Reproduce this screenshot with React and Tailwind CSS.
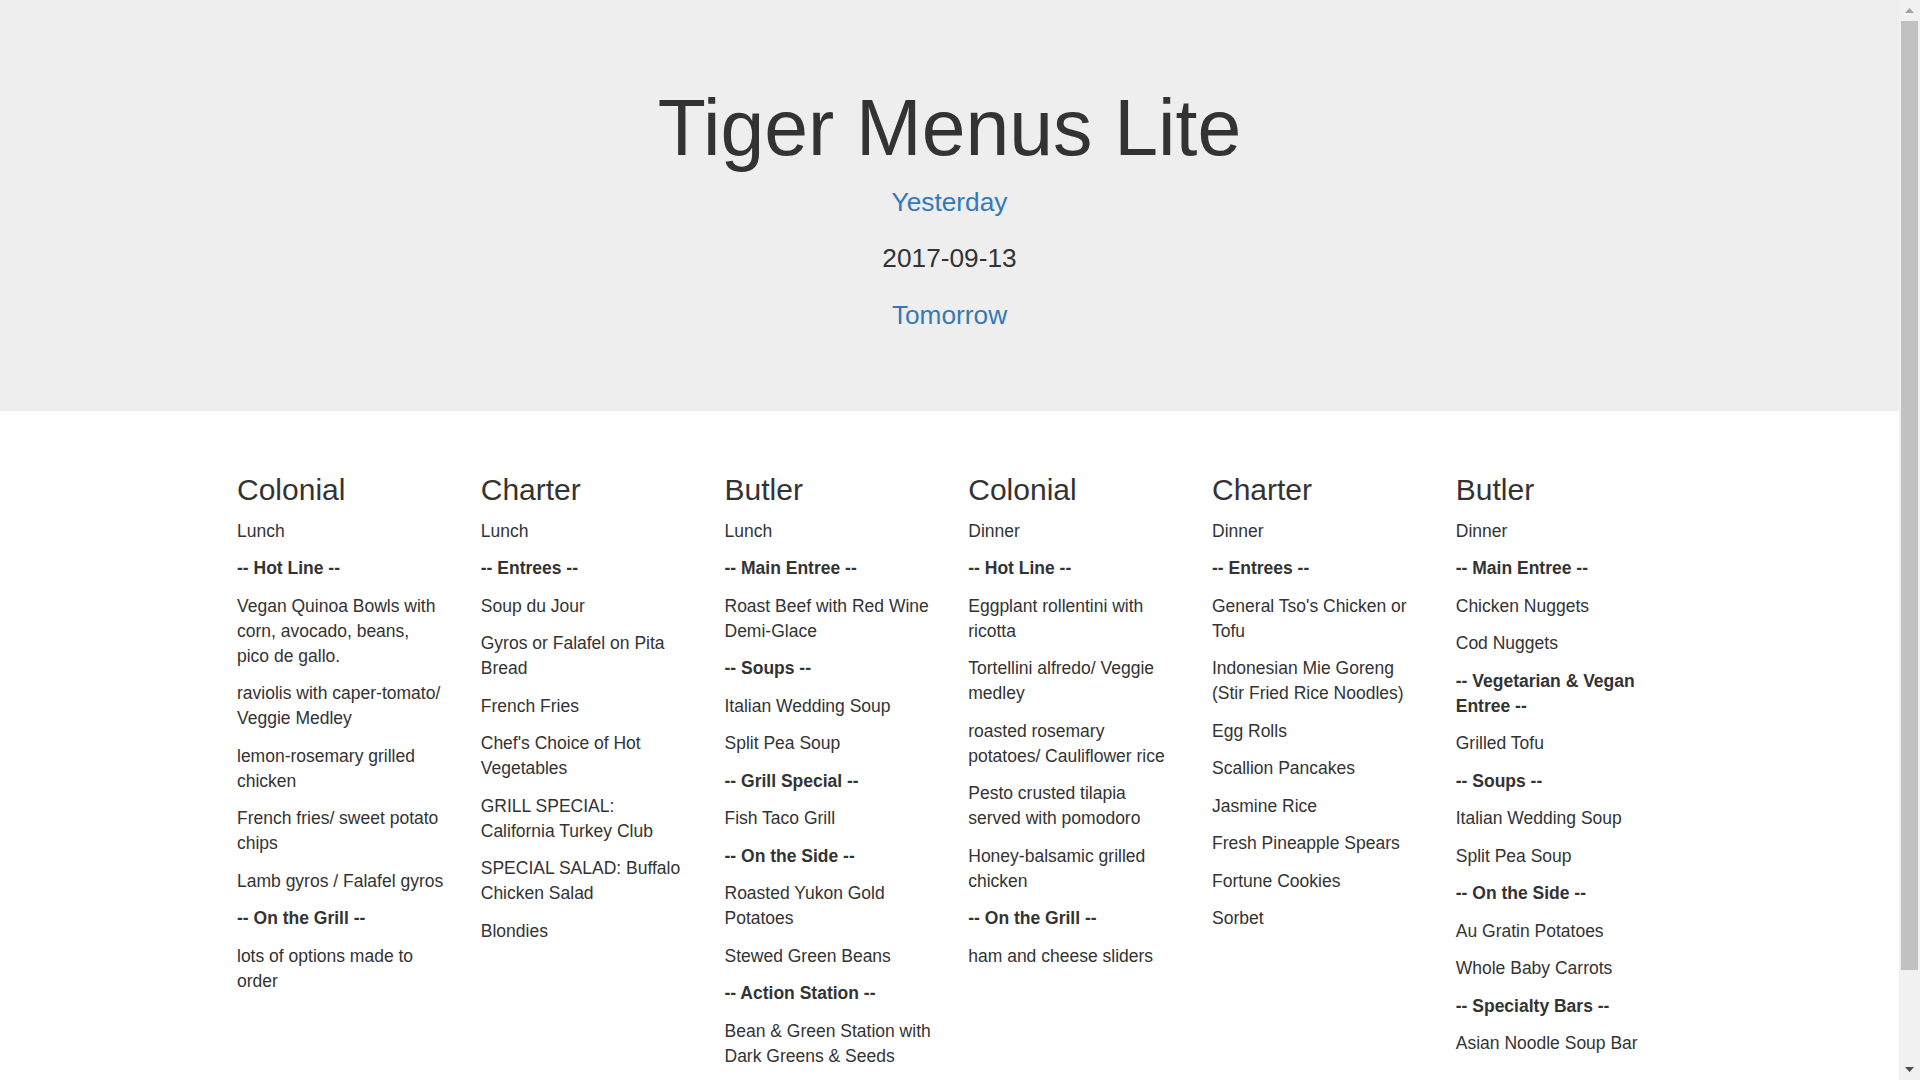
import React from "react";

const menus = [
  {
    hall: "Colonial",
    meal: "Lunch",
    items: [
      ["h", "-- Hot Line --"],
      ["i", "Vegan Quinoa Bowls with corn, avocado, beans, pico de gallo."],
      ["i", "raviolis with caper-tomato/ Veggie Medley"],
      ["i", "lemon-rosemary grilled chicken"],
      ["i", "French fries/ sweet potato chips"],
      ["i", "Lamb gyros / Falafel gyros"],
      ["h", "-- On the Grill --"],
      ["i", "lots of options made to order"],
    ],
  },
  {
    hall: "Charter",
    meal: "Lunch",
    items: [
      ["h", "-- Entrees --"],
      ["i", "Soup du Jour"],
      ["i", "Gyros or Falafel on Pita Bread"],
      ["i", "French Fries"],
      ["i", "Chef's Choice of Hot Vegetables"],
      ["i", "GRILL SPECIAL: California Turkey Club"],
      ["i", "SPECIAL SALAD: Buffalo Chicken Salad"],
      ["i", "Blondies"],
    ],
  },
  {
    hall: "Butler",
    meal: "Lunch",
    items: [
      ["h", "-- Main Entree --"],
      ["i", "Roast Beef with Red Wine Demi-Glace"],
      ["h", "-- Soups --"],
      ["i", "Italian Wedding Soup"],
      ["i", "Split Pea Soup"],
      ["h", "-- Grill Special --"],
      ["i", "Fish Taco Grill"],
      ["h", "-- On the Side --"],
      ["i", "Roasted Yukon Gold Potatoes"],
      ["i", "Stewed Green Beans"],
      ["h", "-- Action Station --"],
      ["i", "Bean & Green Station with Dark Greens & Seeds"],
    ],
  },
  {
    hall: "Colonial",
    meal: "Dinner",
    items: [
      ["h", "-- Hot Line --"],
      ["i", "Eggplant rollentini with ricotta"],
      ["i", "Tortellini alfredo/ Veggie medley"],
      ["i", "roasted rosemary potatoes/ Cauliflower rice"],
      ["i", "Pesto crusted tilapia served with pomodoro"],
      ["i", "Honey-balsamic grilled chicken"],
      ["h", "-- On the Grill --"],
      ["i", "ham and cheese sliders"],
    ],
  },
  {
    hall: "Charter",
    meal: "Dinner",
    items: [
      ["h", "-- Entrees --"],
      ["i", "General Tso's Chicken or Tofu"],
      ["i", "Indonesian Mie Goreng (Stir Fried Rice Noodles)"],
      ["i", "Egg Rolls"],
      ["i", "Scallion Pancakes"],
      ["i", "Jasmine Rice"],
      ["i", "Fresh Pineapple Spears"],
      ["i", "Fortune Cookies"],
      ["i", "Sorbet"],
    ],
  },
  {
    hall: "Butler",
    meal: "Dinner",
    items: [
      ["h", "-- Main Entree --"],
      ["i", "Chicken Nuggets"],
      ["i", "Cod Nuggets"],
      ["h", "-- Vegetarian & Vegan Entree --"],
      ["i", "Grilled Tofu"],
      ["h", "-- Soups --"],
      ["i", "Italian Wedding Soup"],
      ["i", "Split Pea Soup"],
      ["h", "-- On the Side --"],
      ["i", "Au Gratin Potatoes"],
      ["i", "Whole Baby Carrots"],
      ["h", "-- Specialty Bars --"],
      ["i", "Asian Noodle Soup Bar"],
    ],
  },
];

const MenuColumn = ({ menu }) => (
  <div className="px-[18.75px]">
    <h3 className="mt-[25px] mb-[12.5px] text-[30px] leading-[33px] font-normal">
      {menu.hall}
    </h3>
    <p className="mb-[12.5px]">{menu.meal}</p>
    {menu.items.map(([kind, text], index) =>
      kind === "h" ? (
        <p key={index} className="mb-[12.5px]">
          <strong className="font-bold">{text}</strong>
        </p>
      ) : (
        <p key={index} className="mb-[12.5px]">
          {text}
        </p>
      )
    )}
  </div>
);

// window scrollbar, as it shows in the screenshot
const Scrollbar = () => (
  <aside className="w-[21px] shrink-0 h-screen sticky top-0 bg-[#f1f1f1] flex flex-col items-center">
    <div className="h-[21px] flex items-center justify-center">
      <svg width="9" height="5" viewBox="0 0 9 5">
        <path d="M4.5 0 L9 5 L0 5 Z" fill="#a3a3a3" />
      </svg>
    </div>
    <div className="w-[17px] h-[949px] bg-[#c1c1c1]" />
    <div className="flex-1" />
    <div className="h-[21px] flex items-center justify-center">
      <svg width="9" height="5" viewBox="0 0 9 5">
        <path d="M0 0 L9 0 L4.5 5 Z" fill="#505050" />
      </svg>
    </div>
  </aside>
);

export default function App() {
  return (
    <div className="flex min-h-screen bg-white text-[#333] text-[17.5px] leading-[25px] font-['Liberation_Sans',Arial,sans-serif]">
      <main className="flex-1 min-w-0">
        {/* Jumbotron */}
        <div className="bg-[#eee] pt-[60px] pb-[58px] mb-[37.5px] text-center">
          <h1 className="mt-[25px] mb-[12.5px] text-[78.75px] leading-[1.1] font-normal">
            Tiger Menus Lite
          </h1>
          <p className="mb-[18.75px] text-[26.25px] leading-[37.5px]">
            <a href="#" className="text-[#337ab7]">
              Yesterday
            </a>
          </p>
          <p className="mb-[18.75px] text-[26.25px] leading-[37.5px]">2017-09-13</p>
          <p className="mb-[18.75px] text-[26.25px] leading-[37.5px]">
            <a href="#" className="text-[#337ab7]">
              Tomorrow
            </a>
          </p>
        </div>

        {/* Menus */}
        <div className="w-[1462.5px] mx-auto grid grid-cols-6">
          {menus.map((menu, index) => (
            <MenuColumn key={index} menu={menu} />
          ))}
        </div>
      </main>
      <Scrollbar />
    </div>
  );
}
